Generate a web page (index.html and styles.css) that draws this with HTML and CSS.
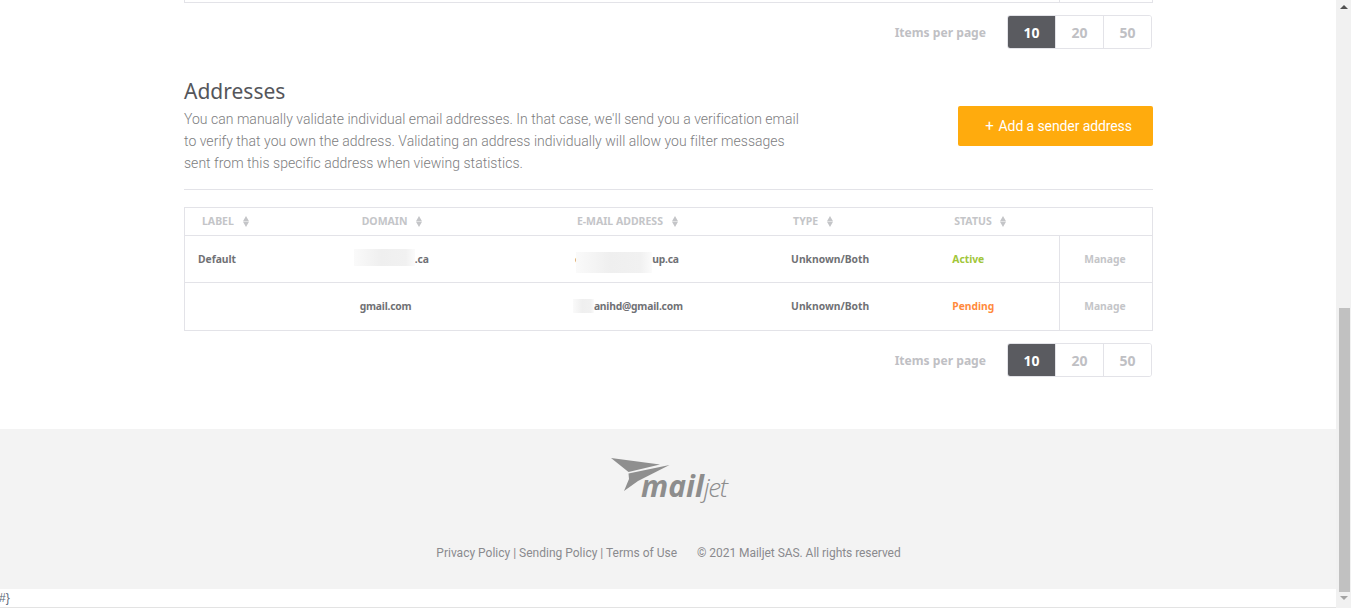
FILE: index.html
```html
<!DOCTYPE html>
<html lang="en">

<head>
    <meta charset="UTF-8">
    <meta name="viewport" content="width=device-width, initial-scale=1.0">
    <title>Addresses</title>
    <link rel="stylesheet" href="styles.css">
</head>

<body>
    <div class="page">
        <main class="content">
            <div class="tableEnd"><span></span></div>

            <div class="pager">
                <span class="pagerLabel">Items per page</span>
                <div class="pagerBtns">
                    <button class="pagerBtn active">10</button>
                    <button class="pagerBtn">20</button>
                    <button class="pagerBtn">50</button>
                </div>
            </div>

            <section class="intro">
                <div class="introText">
                    <h2>Addresses</h2>
                    <p>You can manually validate individual email addresses. In that case, we'll send you a verification email to verify that you own the address. Validating an address individually will allow you filter messages sent from this specific address when viewing statistics.</p>
                </div>
                <button class="addBtn"><span class="plus">+</span>Add a sender address</button>
            </section>

            <table class="addrTable">
                <colgroup>
                    <col class="c1">
                    <col class="c2">
                    <col class="c3">
                    <col class="c4">
                    <col class="c5">
                    <col class="c6">
                </colgroup>
                <thead>
                    <tr>
                        <th>LABEL <svg class="sort" viewBox="0 0 6 11"><path d="M3 0L6 5.3H0zM3 11L0 5.7h6z" /></svg></th>
                        <th>DOMAIN <svg class="sort" viewBox="0 0 6 11"><path d="M3 0L6 5.3H0zM3 11L0 5.7h6z" /></svg></th>
                        <th>E-MAIL ADDRESS <svg class="sort" viewBox="0 0 6 11"><path d="M3 0L6 5.3H0zM3 11L0 5.7h6z" /></svg></th>
                        <th>TYPE <svg class="sort" viewBox="0 0 6 11"><path d="M3 0L6 5.3H0zM3 11L0 5.7h6z" /></svg></th>
                        <th>STATUS <svg class="sort" viewBox="0 0 6 11"><path d="M3 0L6 5.3H0zM3 11L0 5.7h6z" /></svg></th>
                        <th></th>
                    </tr>
                </thead>
                <tbody>
                    <tr>
                        <td>Default</td>
                        <td class="masked"><span class="blur blurDomain"></span><span class="domainEnd">.ca</span></td>
                        <td class="masked">c<span class="blur blurMail1"></span><span class="mailEnd1">up.ca</span></td>
                        <td>Unknown/Both</td>
                        <td class="active">Active</td>
                        <td class="manage">Manage</td>
                    </tr>
                    <tr>
                        <td></td>
                        <td class="tight">gmail.com</td>
                        <td class="masked"><span class="blur blurMail2"></span><span class="mailEnd2">anihd@gmail.com</span></td>
                        <td>Unknown/Both</td>
                        <td class="pending">Pending</td>
                        <td class="manage">Manage</td>
                    </tr>
                </tbody>
            </table>

            <div class="pager pagerBottom">
                <span class="pagerLabel">Items per page</span>
                <div class="pagerBtns">
                    <button class="pagerBtn active">10</button>
                    <button class="pagerBtn">20</button>
                    <button class="pagerBtn">50</button>
                </div>
            </div>

            <footer class="footer">
                <svg class="logo" width="118" height="50" viewBox="0 0 118 50">
                    <path d="M1 0L50 6.5L18.5 14z" fill="#8f8f8f" />
                    <path d="M18.5 15.5L59.5 7L28 23L14 33L19 21z" fill="#8f8f8f" />
                    <text x="31" y="39" class="logoMail">mail<tspan class="logoJet">jet</tspan></text>
                </svg>
                <div class="footerLinks">
                    <span>Privacy Policy | Sending Policy | Terms of Use</span>
                    <span class="copyright">© 2021 Mailjet SAS. All rights reserved</span>
                </div>
            </footer>

            <div class="stray">#}</div>
        </main>

        <div class="scrollbar">
            <div class="arrowUp"></div>
            <div class="thumb"></div>
            <div class="arrowDown"></div>
        </div>
    </div>
</body>

</html>
```

FILE: styles.css
```css
html,
body {
    margin: 0;
    height: 100%;
    overflow: hidden;
    background-color: white;
}

body {
    font-family: Roboto, sans-serif;
    color: #8b8b8b;
}

.page {
    display: flex;
    height: 608px;
}

.content {
    width: 1336px;
    display: flex;
    flex-direction: column;
}

.tableEnd {
    margin: 0 183px 0 184px;
    height: 2px;
    border: 1px solid #e3e3e8;
    border-top: none;
}

.tableEnd span {
    display: block;
    height: 2px;
    width: 1px;
    margin-left: 874px;
    background-color: #e3e3e8;
}

.pager {
    display: flex;
    justify-content: flex-end;
    align-items: center;
    gap: 21px;
    margin: 12px 184px 0 0;
}

.pagerBottom {
    margin-top: 12px;
}

.pagerLabel {
    font-family: "Noto Sans", sans-serif;
    font-size: 12.1px;
    font-weight: 700;
    color: #bfc0c4;
}

.pagerBtns {
    display: flex;
    width: 145px;
    height: 34px;
    box-sizing: border-box;
    border: 1px solid #e3e3e8;
    border-radius: 3px;
    overflow: hidden;
}

.pagerBtn {
    flex: 1;
    padding: 0;
    border: none;
    border-left: 1px solid #e3e3e8;
    background-color: white;
    font-family: "Noto Sans", sans-serif;
    font-size: 14px;
    font-weight: 700;
    color: #bfc0c4;
}

.pagerBtn.active {
    border-left: none;
    background-color: #5a5b60;
    color: white;
}

.intro {
    display: flex;
    justify-content: space-between;
    align-items: flex-start;
    margin: 26px 183px 0 184px;
    height: 114px;
    border-bottom: 1px solid #e3e3e8;
}

.introText {
    width: 625px;
}

.intro h2 {
    margin: 0 0 1px;
    padding-top: 1px;
    font-family: "Noto Sans", sans-serif;
    font-size: 21px;
    line-height: 31px;
    font-weight: 400;
    color: #55565b;
}

.intro p {
    margin: 0;
    font-size: 14px;
    line-height: 22px;
    font-weight: 300;
    letter-spacing: 0.025px;
    color: #7d7d80;
}

.addBtn {
    margin-top: 31px;
    width: 195px;
    height: 40px;
    border: none;
    border-radius: 2px;
    background-color: #ffab0d;
    font-family: Roboto, sans-serif;
    font-size: 14px;
    letter-spacing: -0.1px;
    color: #fff;
    padding: 0 0 0 6px;
}

.plus {
    margin-right: 5px;
    font-size: 15px;
}

.addrTable {
    margin: 17px 183px 0 184px;
    width: 969px;
    table-layout: fixed;
    border-collapse: collapse;
    border: 1px solid #e3e3e8;
    font-family: "Noto Sans", sans-serif;
}

.c1 { width: 160px; }
.c2 { width: 215px; }
.c3 { width: 216px; }
.c4 { width: 161px; }
.c5 { width: 122px; }
.c6 { width: 93px; }

th {
    height: 28px;
    padding: 0 0 1px 17px;
    box-sizing: border-box;
    text-align: left;
    font-size: 10.5px;
    font-weight: 700;
    color: #c4c5c8;
    border-bottom: 1px solid #e3e3e8;
    white-space: nowrap;
}

.sort {
    width: 6px;
    height: 11px;
    margin-left: 6px;
    vertical-align: -2px;
    fill: #c4c5c8;
}

td {
    height: 46px;
    padding: 0 0 0 15px;
    font-size: 10.3px;
    font-weight: 700;
    color: #707175;
    border-bottom: 1px solid #e3e3e8;
    white-space: nowrap;
}

td:first-child {
    padding-left: 13px;
}

tbody tr:last-child td {
    height: 48px;
    padding-bottom: 1px;
    box-sizing: border-box;
}

.masked {
    position: relative;
}

.tight,
.mailEnd1,
.mailEnd2 {
    letter-spacing: -0.2px;
}

.blur {
    position: absolute;
    background: linear-gradient(90deg, #fafafa, #efefef 45%, #f1f1f1 85%, #fbfbfb);
}

.blurDomain {
    left: 9px;
    top: 13px;
    width: 61px;
    height: 17px;
}

.blurMail1 {
    left: 16px;
    top: 16px;
    width: 76px;
    height: 21px;
}

.blurMail2 {
    left: 13px;
    top: 16px;
    width: 21px;
    height: 14px;
}

.domainEnd {
    margin-left: 55px;
}

.mailEnd1 {
    margin-left: 72px;
}

.mailEnd2 {
    margin-left: 19px;
}

.active {
    color: #a1c63a;
}

.pending {
    color: #ff8a3d;
}

.manage {
    padding: 0 2px 0 0;
    text-align: center;
    color: #c4c5c8;
    border-left: 1px solid #e3e3e8;
}

.footer {
    flex-shrink: 0;
    margin-top: 52px;
    height: 160px;
    background-color: #f3f3f3;
    display: flex;
    flex-direction: column;
    align-items: center;
}

.logo {
    margin-top: 29px;
    margin-left: 1px;
    overflow: visible;
}

.logoMail {
    font-family: "Open Sans", sans-serif;
    font-size: 30px;
    font-weight: 700;
    font-style: italic;
    fill: #8d8d8d;
}

.logoJet {
    font-size: 26px;
    font-weight: 300;
    letter-spacing: -1.4px;
}

.footerLinks {
    display: flex;
    gap: 20px;
    margin-top: 38px;
    margin-left: 1px;
    font-size: 12px;
    line-height: 14px;
    color: #8a8a8e;
}

.copyright {
    letter-spacing: -0.05px;
}

.stray {
    flex: 1;
    margin-left: -1px;
    font-family: "Liberation Sans", sans-serif;
    font-size: 12px;
    line-height: 18px;
    color: #5d6a78;
    border-bottom: 1px solid #e3e3e3;
}

.scrollbar {
    width: 15px;
    height: 608px;
    background-color: #f1f1f1;
    display: flex;
    flex-direction: column;
    align-items: center;
}

.arrowUp,
.arrowDown {
    width: 0;
    height: 0;
    border-left: 4px solid transparent;
    border-right: 4px solid transparent;
}

.arrowUp {
    margin-top: 5px;
    border-bottom: 4px solid #505050;
}

.thumb {
    width: 11px;
    height: 284px;
    margin-top: 299px;
    margin-left: 1px;
    background-color: #c1c1c1;
}

.arrowDown {
    margin-top: 4px;
    border-top: 4px solid #a3a3a3;
}
```
